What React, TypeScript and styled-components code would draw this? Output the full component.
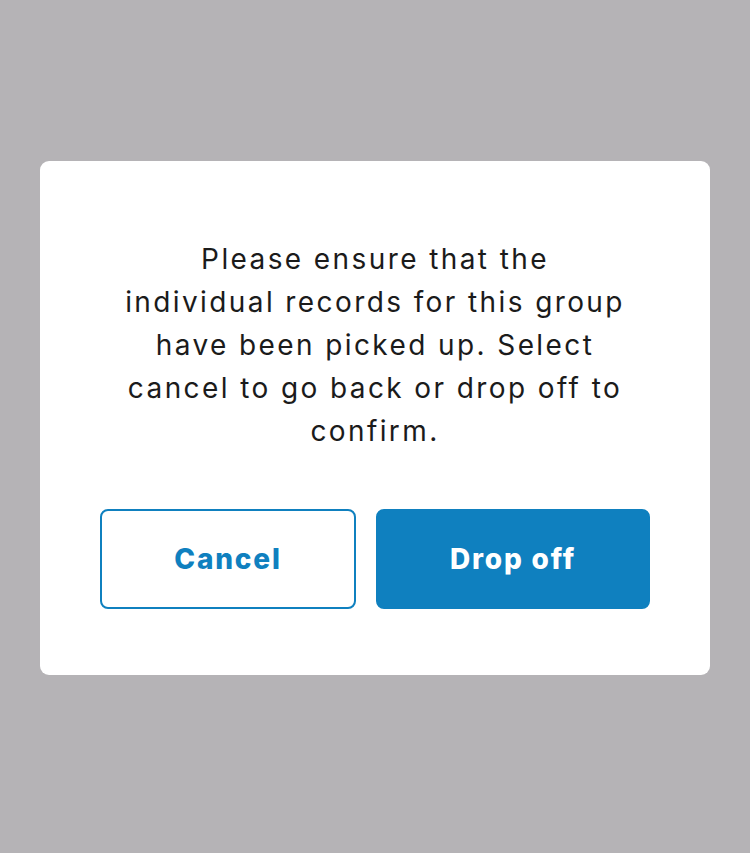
import React from "react";
import styled, { createGlobalStyle } from "styled-components";

const Global = createGlobalStyle`
  html, body { margin: 0; padding: 0; }
  body { background: #b5b3b6; }
`;

const Screen = styled.div`
  width: 750px;
  height: 853px;
  background: #b5b3b6;
  display: flex;
  justify-content: center;
  padding-top: 161px;
  box-sizing: border-box;
`;

const Dialog = styled.div`
  width: 670px;
  height: 514px;
  box-sizing: border-box;
  background: #ffffff;
  border-radius: 9px;
  padding: 77px 60px 0;
  display: flex;
  flex-direction: column;
  align-items: center;
`;

const Message = styled.p`
  margin: 0;
  width: 550px;
  font-family: Inter, "Noto Sans", sans-serif;
  font-size: 28px;
  line-height: 43px;
  color: #1b1b1b;
  text-align: center;
  letter-spacing: 2.4px;
`;

const Actions = styled.div`
  display: flex;
  gap: 20px;
  margin-top: 56px;
  width: 550px;
`;

const Button = styled.button<{ $primary?: boolean; $w: number }>`
  width: ${(p) => p.$w}px;
  height: 100px;
  box-sizing: border-box;
  border-radius: 8px;
  border: 2px solid #0f80bf;
  background: ${(p) => (p.$primary ? "#0f80bf" : "#ffffff")};
  color: ${(p) => (p.$primary ? "#ffffff" : "#0f80bf")};
  font-family: Inter, "Noto Sans", sans-serif;
  font-weight: 800;
  font-size: 28px;
  letter-spacing: 1.8px;
  cursor: pointer;
`;

export default function App() {
  return (
    <>
      <Global />
      <Screen>
        <Dialog>
          <Message>
            Please ensure that the
            <br />
            individual records for this group
            <br />
            have been picked up. Select
            <br />
            cancel to go back or drop off to
            <br />
            confirm.
          </Message>
          <Actions>
            <Button $w={256}>Cancel</Button>
            <Button $w={274} $primary>
              Drop off
            </Button>
          </Actions>
        </Dialog>
      </Screen>
    </>
  );
}
